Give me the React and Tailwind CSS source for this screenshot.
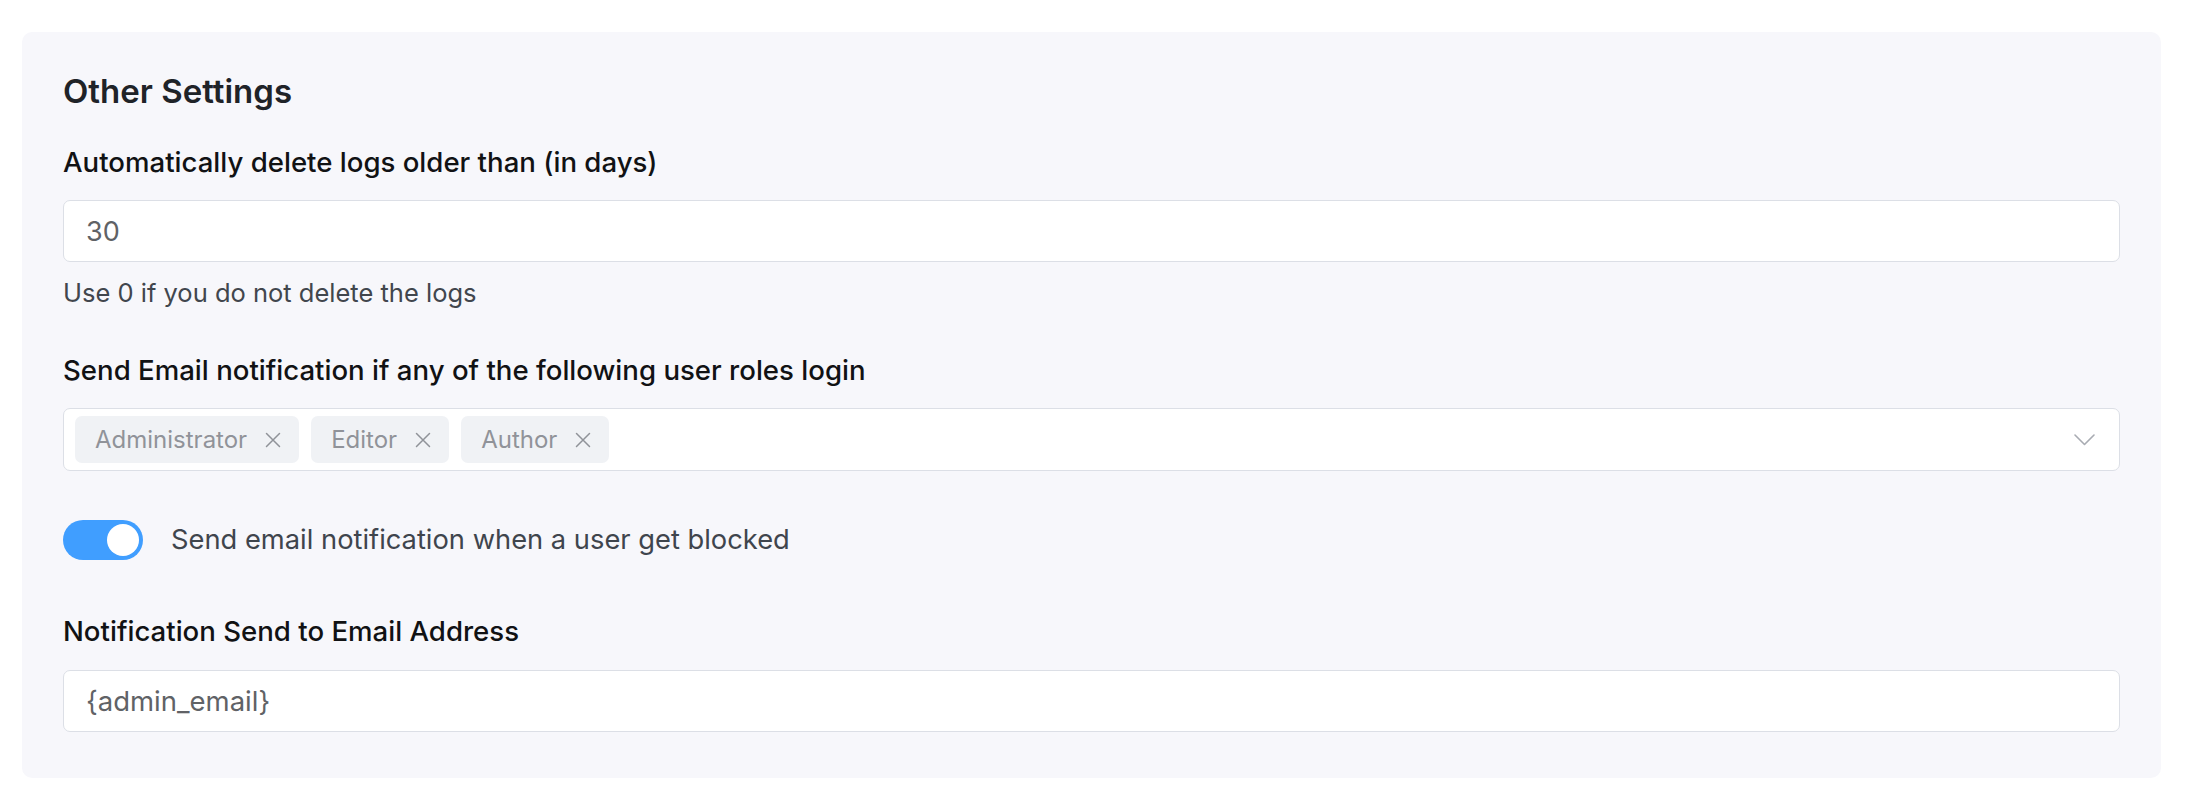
import { useState } from "react";

const roles = ["Administrator", "Editor", "Author"];

const CloseIcon = () => (
  <svg width="16" height="16" viewBox="0 0 16 16" fill="none" stroke="currentColor" strokeWidth="1.5" strokeLinecap="round">
    <path d="M1.5 1.5 L14.5 14.5 M14.5 1.5 L1.5 14.5" />
  </svg>
);

const ChevronDown = () => (
  <svg width="21" height="12" viewBox="0 0 21 12" fill="none" stroke="currentColor" strokeWidth="1.6" strokeLinecap="round" strokeLinejoin="round">
    <path d="M1 1 L10.5 10.5 L20 1" />
  </svg>
);

const Label = ({ children, className = "" }) => (
  <label className={`block text-[27.6px] leading-[32px] font-medium text-[#111214] ${className}`}>
    {children}
  </label>
);

export default function App() {
  const [selected, setSelected] = useState(roles);
  const [notifyBlocked, setNotifyBlocked] = useState(true);
  const [days, setDays] = useState("30");
  const [email, setEmail] = useState("{admin_email}");

  return (
    <div
      className="min-h-screen bg-white pl-[22px] pr-[27px] pt-[32px] pb-[29px]"
      style={{ fontFamily: "Inter, 'Noto Sans', sans-serif" }}
    >
      <div className="rounded-[10px] bg-[#f7f7fb] px-[41px] pt-[39px] pb-[46px]">
        <h2 className="text-[33px] leading-[40px] font-semibold text-[#1f2328]">Other Settings</h2>

        <Label className="mt-[35px]">Automatically delete logs older than (in days)</Label>
        <input
          value={days}
          onChange={(e) => setDays(e.target.value)}
          className="mt-[22px] block w-full h-[62px] rounded-[7px] border-[1.5px] border-[#dcdfe6] bg-white px-[22px] text-[27px] text-[#606266] outline-none"
        />
        <p className="mt-[17px] text-[25.5px] leading-[28px] text-[#41464d]">Use 0 if you do not delete the logs</p>

        <Label className="mt-[47px]">Send Email notification if any of the following user roles login</Label>
        <div className="mt-[22px] flex h-[63px] items-center justify-between rounded-[7px] border-[1.5px] border-[#dcdfe6] bg-white pl-[11px] pr-[24px]">
          <div className="flex items-center gap-[12px]">
            {selected.map((role) => (
              <span
                key={role}
                className="flex h-[47px] items-center gap-[18px] rounded-[7px] bg-[#f0f2f5] pl-[20px] pr-[18px] text-[24px] text-[#909399]"
              >
                {role}
                <button
                  type="button"
                  onClick={() => setSelected(selected.filter((r) => r !== role))}
                  className="text-[#909399]"
                >
                  <CloseIcon />
                </button>
              </span>
            ))}
          </div>
          <span className="text-[#a8abb2]">
            <ChevronDown />
          </span>
        </div>

        <div className="mt-[49px] flex items-center gap-[28px]">
          <button
            type="button"
            onClick={() => setNotifyBlocked(!notifyBlocked)}
            className={`flex h-[40px] w-[80px] items-center rounded-full p-[4px] ${
              notifyBlocked ? "justify-end bg-[#409eff]" : "justify-start bg-[#dcdfe6]"
            }`}
          >
            <span className="h-[32px] w-[32px] rounded-full bg-white" />
          </button>
          <span className="text-[27.3px] leading-[32px] text-[#3f454d]">
            Send email notification when a user get blocked
          </span>
        </div>

        <Label className="mt-[55px]">Notification Send to Email Address</Label>
        <input
          value={email}
          onChange={(e) => setEmail(e.target.value)}
          className="mt-[23px] block w-full h-[62px] rounded-[7px] border-[1.5px] border-[#dcdfe6] bg-white px-[22px] text-[27.5px] text-[#606266] outline-none"
        />
      </div>
    </div>
  );
}
